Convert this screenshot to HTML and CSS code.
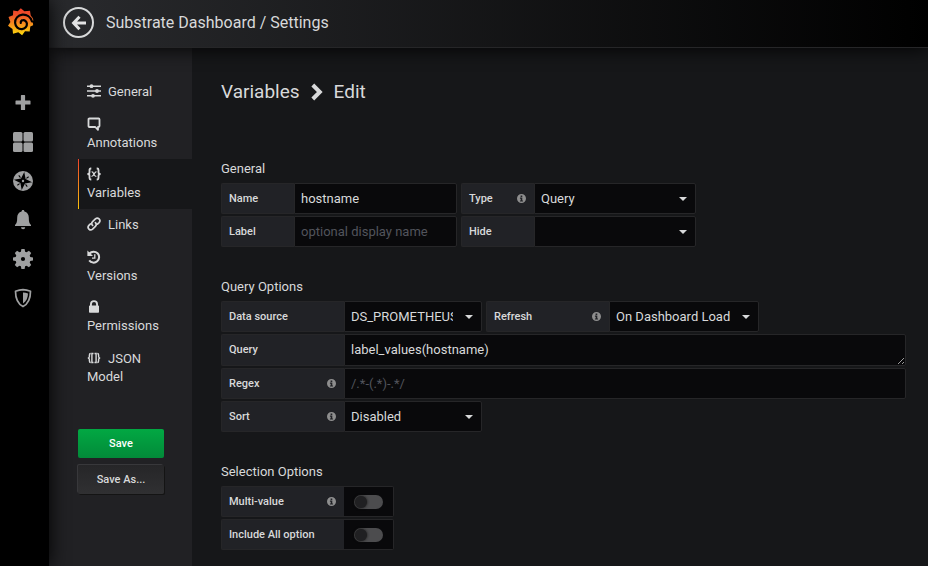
FILE: index.html
```html
<!DOCTYPE html>
<html lang="en">
<head>
<meta charset="utf-8">
<title>Substrate Dashboard / Settings</title>
<link rel="stylesheet" href="styles.css">
</head>
<body>
<svg class="defs" aria-hidden="true">
  <symbol id="info" viewBox="0 0 16 16"><path fill-rule="evenodd" d="M8 0a8 8 0 1 0 0 16A8 8 0 0 0 8 0zM6.400 2.600h3v2.600h-3zM5.200 6.400h4.200v5h1.400v2H5.200v-2h1.400v-3H5.200z"/></symbol>
</svg>
<div class="app">
  <nav class="sidemenu" aria-label="Main">
    <a class="logo" href="#" aria-label="Home">
      <svg width="28" height="30" viewBox="0 0 28 30">
        <defs><linearGradient id="flame" x1="0" y1="0" x2="0" y2="1"><stop offset="0" stop-color="#f0402a"/><stop offset=".25" stop-color="#f0512a"/><stop offset="1" stop-color="#fcdc0c"/></linearGradient></defs>
        <path fill="url(#flame)" d="M13.800 1.200l3.600 3.100 5.600-.5.700 4.700c1.500 1.500 2.400 3.100 2.700 4.900l-1.700.8c1.300 1.500 1.500 2.700 1.400 4.100l-2.800 1.200-.6 5-4.700-.3-2.900 4.100-3.800-3-5.300 1.400-.5-4.700L1 18.800l2.400-3.900L1.500 10l4.500-1.800.2-4.700 4.600.8z"/>
        <path fill="none" stroke="#000" stroke-width="2.200" stroke-linecap="round" d="M25 14.500C23.600 9.500 19.500 7.400 15.500 7.700c-4.600.4-7.700 4-7.400 8.200.3 3.900 3.400 6.500 6.900 6.200 3.100-.3 5.200-2.700 4.900-5.400-.2-2.200-2-3.700-3.900-3.500-1.500.1-2.500 1.300-2.200 2.700"/>
      </svg>
    </a>
    <a class="sidelink" href="#" aria-label="Create"><svg width="20" height="20" viewBox="0 0 20 20"><path d="M8.500 2h3q.6 0 .6.600v4.800h4.800q.6 0 .6.600v3q0 .6-.6.600h-4.800v4.800q0 .6-.6.600h-3q-.6 0-.6-.6v-4.800H3.100q-.6 0-.6-.6v-3q0-.6.600-.6h4.800V2.600q0-.6.600-.6z"/></svg></a>
    <a class="sidelink" href="#" aria-label="Dashboards"><svg width="20" height="20" viewBox="0 0 20 20"><rect width="9.500" height="9.500" rx="1.500"/><rect x="10.500" width="9.500" height="9.500" rx="1.500"/><rect y="10.500" width="9.500" height="9.500" rx="1.500"/><rect x="10.500" y="10.500" width="9.500" height="9.500" rx="1.500"/></svg></a>
    <a class="sidelink" href="#" aria-label="Explore"><svg width="20" height="20" viewBox="0 0 20 20"><circle cx="10" cy="10" r="10"/><g transform="rotate(8 10 10)"><path fill="#000" d="M10 .8l2.300 6.900 6.900 2.300-6.900 2.300-2.300 6.900-2.300-6.900L.8 10l6.900-2.300z"/><path stroke="#000" stroke-width="1" d="M5 5l2 2M15 5l-2 2M5 15l2-2M15 15l-2-2"/></g><circle cx="10" cy="10" r="1.200"/></svg></a>
    <a class="sidelink" href="#" aria-label="Alerting"><svg width="20" height="20" viewBox="0 0 20 20"><path d="M10 0c1 0 1.400.7 1.400 1.600 2.900.8 4.400 3.100 4.400 6 0 4.200.5 6.200 2.200 7.400v1H2v-1c1.700-1.200 2.200-3.200 2.200-7.400 0-2.900 1.500-5.200 4.400-6C8.600.7 9 0 10 0zM8 17.200h4.200a2.100 2.100 0 0 1-4.200 0z"/></svg></a>
    <a class="sidelink" href="#" aria-label="Configuration"><svg width="20" height="20" viewBox="0 0 20 20"><path fill-rule="evenodd" d="M8.400 0h3.200l.5 2.700 1.500.6L15.900 1.800l2.300 2.300-1.500 2.300.6 1.500 2.700.5v3.200l-2.700.5-.6 1.500 1.500 2.300-2.300 2.300-2.300-1.500-1.500.6-.5 2.700H8.400l-.5-2.700-1.500-.6-2.300 1.500-2.300-2.300 1.500-2.300-.6-1.500L0 11.600V8.400l2.700-.5.600-1.500L1.800 4.100l2.300-2.300 2.300 1.500 1.500-.6zM10 7.900a2.100 2.100 0 1 0 0 4.200 2.100 2.100 0 0 0 0-4.200z"/></svg></a>
    <a class="sidelink" href="#" aria-label="Server Admin"><svg width="20" height="20" viewBox="0 0 20 20"><path fill="none" stroke="#9fa0a1" stroke-width="1.700" stroke-linejoin="round" d="M10 1.600c2.600.2 5 .8 7.500 1.700 0 6.200-1.500 12.200-7.500 15.300-6-3.100-7.500-9.100-7.500-15.300C5 2.400 7.400 1.800 10 1.600z"/><path d="M10 4.500c1.800 0 3.300.4 5 1-.2 4.200-1.500 7.800-5 10z"/></svg></a>
  </nav>
  <div class="page">
    <header class="navbar">
      <button class="back" type="button" aria-label="Back"><svg width="16" height="16" viewBox="0 0 16 16"><path fill="none" stroke="#e3e3e4" stroke-width="3" d="M8.500 1.800L2.600 8l5.900 6.200M3 8h12"/></svg></button>
      <a class="navtitle" href="#">Substrate Dashboard / Settings</a>
    </header>
    <div class="body">
      <aside class="settings">
        <nav class="tabs" aria-label="Settings">
          <a class="tab" href="#"><svg width="14" height="14" viewBox="0 0 14 14"><path d="M0 1.500h14v1.400H0zM0 6.300h14v1.400H0zM0 11.100h14v1.400H0z"/><circle cx="4.500" cy="2.200" r="1.900"/><circle cx="10" cy="7" r="1.900"/><circle cx="6" cy="11.800" r="1.900"/></svg><span>General</span></a>
          <a class="tab tab-stacked" href="#"><svg width="14" height="14" viewBox="0 0 14 14"><path fill="none" stroke="#d8d9da" stroke-width="1.800" stroke-linejoin="round" d="M2.400 1.500h9.200q.9 0 .9.900v6.700q0 .9-.9.900H11v2.800L8.300 10H2.400q-.9 0-.9-.9V2.400q0-.9.900-.9z"/></svg><span>Annotations</span></a>
          <a class="tab tab-stacked tab-active" href="#" aria-current="page"><svg width="14" height="14" viewBox="0 0 14 14"><path fill="none" stroke="#d8d9da" stroke-width="1.800" d="M4.300 1.500h-.5Q2.500 1.500 2.500 2.900v2.300Q2.500 7 .4 7q2.100 0 2.100 1.800v2.300q0 1.400 1.300 1.400h.5M9.700 1.500h.5q1.300 0 1.300 1.400v2.300Q11.500 7 13.600 7q-2.100 0-2.100 1.800v2.300q0 1.400-1.300 1.400h-.5"/><path fill="none" stroke="#d8d9da" stroke-width="1.200" d="M4.600 5c2.400-1 2 5.200 4.800 4.200M9.500 5C7.500 4.300 6.500 10 4.400 9.200"/></svg><span>Variables</span></a>
          <a class="tab" href="#"><svg width="14" height="14" viewBox="0 0 14 14"><g fill="none" stroke="#d8d9da" stroke-width="1.700" stroke-linecap="round"><path d="M5.600 8.400C4.300 7 4.700 5.600 5.600 4.700l2.800-2.800c2.500-2.300 6 1.200 3.700 3.700L10.500 7.200"/><path d="M8.400 5.600c1.300 1.400.9 2.800 0 3.700l-2.800 2.800C3.100 14.400-.4 10.900 1.900 8.400L3.500 6.800"/></g></svg><span>Links</span></a>
          <a class="tab tab-stacked" href="#"><svg width="14" height="14" viewBox="0 0 14 14"><path d="M.4.400V6H6z"/><path fill="none" stroke="#d8d9da" stroke-width="2" d="M2.500 3.500A5.500 5.500 0 1 1 2.200 10.400"/><path fill="none" stroke="#d8d9da" stroke-width="1.300" d="M7.800 4.200v3.900H5"/></svg><span>Versions</span></a>
          <a class="tab tab-stacked" href="#"><svg width="14" height="14" viewBox="0 0 14 14"><path fill-rule="evenodd" d="M3 5.500V4.200a4 4 0 0 1 8 0v1.300h.2q.8 0 .8.800v5.600q0 .8-.8.800H2.800q-.8 0-.8-.8V6.300q0-.8.800-.8zM4.900 5.500h4.200V4.200a2.100 2.100 0 0 0-4.200 0z"/></svg><span>Permissions</span></a>
          <a class="tab tab-wrap" href="#"><svg width="14" height="14" viewBox="0 0 14 14"><path fill="none" stroke="#d8d9da" stroke-width="1.400" d="M3.700 2.500Q2.400 2.500 2.400 4v1.400Q2.400 7 .8 7q1.600 0 1.600 1.600V10q0 1.500 1.300 1.500M10.300 2.500q1.300 0 1.300 1.500v1.400q0 1.600 1.600 1.600-1.600 0-1.600 1.600V10q0 1.500-1.300 1.500M6.500 2.500H4.900v9h1.600M7.500 2.500h1.600v9H7.500"/></svg><span>JSON Model</span></a>
        </nav>
        <div class="actions">
          <button class="btn btn-save" type="button">Save</button>
          <button class="btn btn-copy" type="button">Save As...</button>
        </div>
      </aside>
      <main class="content">
        <h1 class="heading"><a href="#">Variables</a><svg width="12" height="18" viewBox="0 0 12 18"><path fill="none" stroke="#d8d9da" stroke-width="4" d="M1.800 2l7 7-7 7"/></svg><span>Edit</span></h1>
        <form>
          <section class="group">
            <h2>General</h2>
            <div class="row">
              <div class="field"><label class="label label-s" for="name">Name</label><input class="control text-s" id="name" type="text" value="hostname"></div>
              <div class="field"><label class="label label-s" for="type">Type<svg class="info"><use href="#info"/></svg></label><div class="select select-m"><select class="control" id="type"><option>Query</option></select></div></div>
            </div>
            <div class="row">
              <div class="field"><label class="label label-s" for="lbl">Label</label><input class="control text-s" id="lbl" type="text" placeholder="optional display name"></div>
              <div class="field"><label class="label label-s" for="hide">Hide</label><div class="select select-m"><select class="control" id="hide"><option></option></select></div></div>
            </div>
          </section>
          <section class="group">
            <h2>Query Options</h2>
            <div class="row">
              <div class="field"><label class="label label-l" for="ds">Data source</label><div class="select select-s"><select class="control" id="ds"><option>DS_PROMETHEUS</option></select></div></div>
              <div class="field"><label class="label label-l" for="refresh">Refresh<svg class="info"><use href="#info"/></svg></label><div class="select select-r"><select class="control" id="refresh"><option>On Dashboard Load</option></select></div></div>
            </div>
            <div class="row row-tall">
              <div class="field grow"><label class="label label-l" for="query">Query</label><textarea class="control" id="query" rows="1">label_values(hostname)</textarea></div>
            </div>
            <div class="row">
              <div class="field grow"><label class="label label-l" for="regex">Regex<svg class="info"><use href="#info"/></svg></label><input class="control" id="regex" type="text" placeholder="/.*-(.*)-.*/"></div>
            </div>
            <div class="row">
              <div class="field"><label class="label label-l" for="sort">Sort<svg class="info"><use href="#info"/></svg></label><div class="select select-s"><select class="control" id="sort"><option>Disabled</option></select></div></div>
            </div>
          </section>
          <section class="group">
            <h2>Selection Options</h2>
            <div class="row"><div class="field"><label class="label label-l" for="multi">Multi-value<svg class="info"><use href="#info"/></svg></label><div class="switch"><input id="multi" type="checkbox"></div></div></div>
            <div class="row"><div class="field"><label class="label label-l" for="all">Include All option</label><div class="switch"><input id="all" type="checkbox"></div></div></div>
          </section>
        </form>
      </main>
    </div>
  </div>
</div>
</body>
</html>
```
FILE: styles.css
```css
* { box-sizing: border-box; }
body {
  margin: 0;
  background: #161719;
  color: #d8d9da;
  font: 13px/18px Roboto, "Liberation Sans", sans-serif;
}
a { color: inherit; text-decoration: none; }
button, input, select, textarea { font: inherit; color: inherit; margin: 0; }
.defs { display: none; }
.app { display: flex; min-height: 100vh; }

.sidemenu {
  position: relative;
  z-index: 2;
  flex: none;
  width: 49px;
  padding-right: 3px;
  background: #000;
  box-shadow: 0 0 20px #000;
}
.logo { display: block; height: 83px; padding: 7px 0 0 7px; }
.sidelink { display: flex; align-items: center; justify-content: center; height: 39px; fill: #9fa0a1; }

.page { flex: 1; min-width: 0; display: flex; flex-direction: column; }
.navbar {
  position: relative;
  z-index: 1;
  display: flex;
  align-items: center;
  gap: 12px;
  height: 48px;
  padding: 0 14px 2px;
  background: linear-gradient(90deg, #292a2d, #000);
  border-bottom: 1px solid #262628;
  box-shadow: 0 0 20px #000;
}
.back {
  display: flex;
  align-items: center;
  justify-content: center;
  width: 31px;
  height: 31px;
  padding: 0;
  border: 2px solid #d8d9da;
  border-radius: 50%;
  background: none;
}
.navtitle { font-size: 16px; line-height: 24px; }
.body { flex: 1; display: flex; }

.settings { flex: none; width: 143px; padding: 28px 0 0 29px; background: #212124; }
.tab {
  display: block;
  padding: 7px 9px 8px;
}
.tab svg { display: inline-block; margin-right: 7px; vertical-align: -2px; fill: #d8d9da; }
.tab-stacked { padding-bottom: 7px; }
.tab-stacked span { display: block; }
.tab-wrap { padding: 8px 32px 6px 9px; }
.tab-active {
  padding-left: 8px;
  border-left: 1px solid;
  border-image: linear-gradient(#f0402a, #fcc60c) 1;
  background: #161719;
}
.actions { display: grid; gap: 7px; margin: 37px 28px 0 0; }
.btn {
  height: 29px;
  padding: 0;
  border: 0;
  border-radius: 2px;
  font-size: 11px;
  font-weight: 500;
}
.btn-save { background: linear-gradient(#02a843, #028a39); color: #fff; }
.btn-copy { background: linear-gradient(#262628, #303032); box-shadow: -1px -1px 0 #38383b, 1px 1px 0 #141414; }

.content { flex: 1; min-width: 0; padding: 31px 22px 0 29px; }
.heading {
  display: flex;
  align-items: center;
  gap: 11px;
  margin: 0 0 54px;
  font-size: 19px;
  line-height: 26px;
  font-weight: 400;
}
.group + .group { margin-top: 30px; }
h2 { margin: 0 0 4px; font-size: 13px; line-height: 20px; font-weight: 400; }
.row { display: flex; gap: 4px; height: 31px; margin-bottom: 2px; }
.row-tall { height: 32px; }
.field { display: flex; }
.grow { flex: 1; }
.label {
  flex: none;
  display: flex;
  align-items: center;
  justify-content: space-between;
  padding: 0 8px 0 7px;
  border: 1px solid #262628;
  border-right: 0;
  border-radius: 2px 0 0 2px;
  background: #212226;
  font-size: 11px;
  font-weight: 500;
}
.label-s { width: 73px; }
.label-l { width: 123px; }
.info { width: 9px; height: 9px; fill: #8e8e8e; }
.control {
  display: block;
  width: 100%;
  height: 100%;
  padding: 0 6px;
  border: 1px solid #262628;
  border-radius: 0 2px 2px 0;
  background: #09090b;
  outline: 0;
}
.control::placeholder { color: #52545c; opacity: 1; }
.text-s { width: 163px; }
textarea.control { padding-top: 6px; resize: vertical; overflow: hidden; }
.select { position: relative; }
.select .control { appearance: none; padding: 0 28px 0 6px; }
.select::after {
  content: "";
  position: absolute;
  top: 14px;
  right: 9px;
  border: 4px solid transparent;
  border-top-color: #d8d9da;
  border-bottom: 0;
  pointer-events: none;
}
.select-s { width: 138px; }
.select-m { width: 162px; }
.select-r { width: 150px; }
.switch {
  display: flex;
  align-items: center;
  justify-content: center;
  width: 50px;
  border: 1px solid #262628;
  border-left: 0;
  border-radius: 0 2px 2px 0;
  background: #09090b;
}
.switch input {
  appearance: none;
  width: 29px;
  height: 14px;
  border-radius: 7px;
  background: #4c4c4e;
}
.switch input::before {
  content: "";
  display: block;
  width: 12px;
  height: 12px;
  margin: 1px;
  border-radius: 50%;
  background: #202022;
  box-shadow: 0 0 3px #111;
}
```
